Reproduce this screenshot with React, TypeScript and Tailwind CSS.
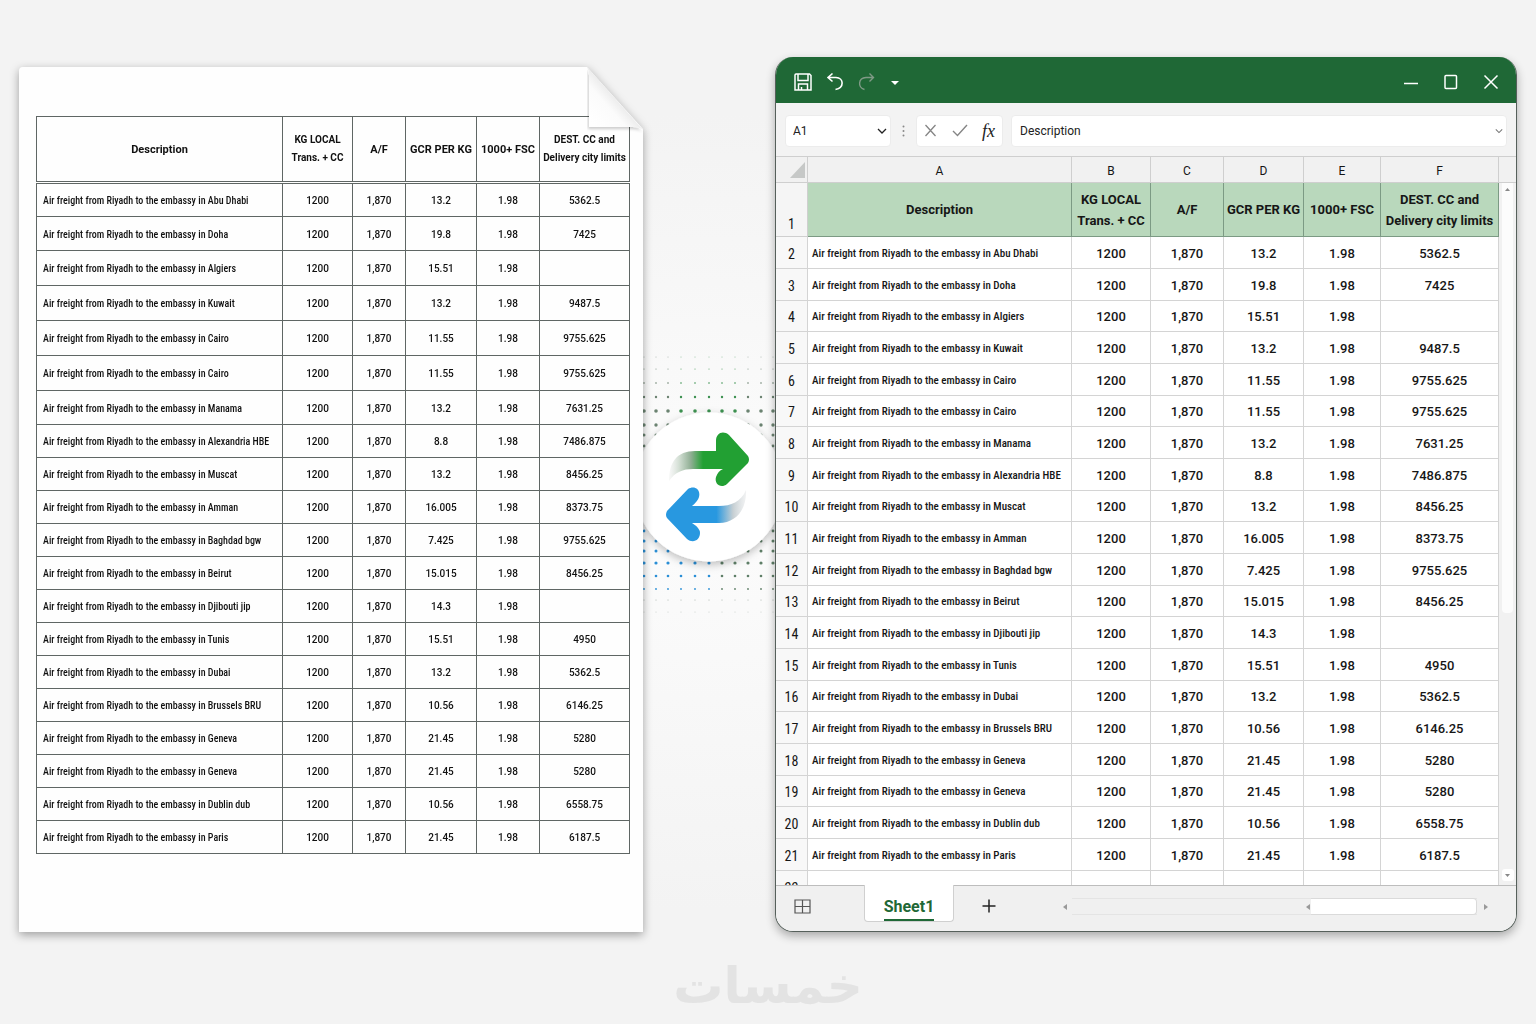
import React from "react";

type Row = {
  city: string;
  gcr: string;
  dest: string;
};

const rows: Row[] = [
  { city: "Abu Dhabi", gcr: "13.2", dest: "5362.5" },
  { city: "Doha", gcr: "19.8", dest: "7425" },
  { city: "Algiers", gcr: "15.51", dest: "" },
  { city: "Kuwait", gcr: "13.2", dest: "9487.5" },
  { city: "Cairo", gcr: "11.55", dest: "9755.625" },
  { city: "Cairo", gcr: "11.55", dest: "9755.625" },
  { city: "Manama", gcr: "13.2", dest: "7631.25" },
  { city: "Alexandria HBE", gcr: "8.8", dest: "7486.875" },
  { city: "Muscat", gcr: "13.2", dest: "8456.25" },
  { city: "Amman", gcr: "16.005", dest: "8373.75" },
  { city: "Baghdad bgw", gcr: "7.425", dest: "9755.625" },
  { city: "Beirut", gcr: "15.015", dest: "8456.25" },
  { city: "Djibouti jip", gcr: "14.3", dest: "" },
  { city: "Tunis", gcr: "15.51", dest: "4950" },
  { city: "Dubai", gcr: "13.2", dest: "5362.5" },
  { city: "Brussels BRU", gcr: "10.56", dest: "6146.25" },
  { city: "Geneva", gcr: "21.45", dest: "5280" },
  { city: "Geneva", gcr: "21.45", dest: "5280" },
  { city: "Dublin dub", gcr: "10.56", dest: "6558.75" },
  { city: "Paris", gcr: "21.45", dest: "6187.5" },
];

// two-line headings are split on \n
const headings = [
  "Description",
  "KG LOCAL\nTrans. + CC",
  "A/F",
  "GCR PER KG",
  "1000+ FSC",
  "DEST. CC and\nDelivery city limits",
];

const cellsOf = (row: Row) => ["1200", "1,870", row.gcr, "1.98", row.dest];

function paperRowHeight(i: number) {
  if (i < 2 || i === 6) return "h-[34px]";
  return i < 6 ? "h-[35px]" : "h-[33px]";
}

function Paper() {
  return (
    <div className="relative mt-[10px] drop-shadow-[0_3px_5px_rgba(0,0,0,0.35)]">
      <div className="h-full rounded-tl-[4px] bg-[#fefefe] px-[13px] pb-[76px] pl-[17px] pt-[49px] [clip-path:polygon(0_0,calc(100%-56px)_0,100%_62px,100%_100%,0_100%)]">
        <table className="w-full table-fixed border-collapse text-[10px] font-medium leading-4 text-[#111]">
          <colgroup>
            <col className="w-[246px]" />
            <col className="w-[70px]" />
            <col className="w-[53px]" />
            <col className="w-[71px]" />
            <col className="w-[63px]" />
            <col className="w-[90px]" />
          </colgroup>
          <thead>
            <tr className="h-[66px]">
              {headings.map((h) => (
                <th
                  key={h}
                  className={`whitespace-pre border border-b-[3px] border-[#5f6664] p-0 font-bold leading-[18px] [border-bottom-style:double] ${
                    h.includes("\n") ? "text-[10px]" : "pt-[2px] text-[11px]"
                  }`}
                >
                  {h}
                </th>
              ))}
            </tr>
          </thead>
          <tbody>
            {rows.map((row, i) => (
              <tr key={i} className={paperRowHeight(i)}>
                <td className="whitespace-nowrap border border-[#5f6664] pb-0 pl-[6px] pr-0 pt-[2px] font-['Roboto_Condensed',Roboto,sans-serif]">
                  Air freight from Riyadh to the embassy in {row.city}
                </td>
                {cellsOf(row).map((c, j) => (
                  <td key={j} className="border border-[#5f6664] p-0 pt-[2px] text-center">
                    {c}
                  </td>
                ))}
              </tr>
            ))}
          </tbody>
        </table>
      </div>
      <svg className="absolute right-0 top-0 h-[66px] w-[56px]" viewBox="0 0 56 66" aria-hidden="true">
        <defs>
          <linearGradient id="fold" x1="0.1" y1="0.9" x2="0.6" y2="0.4">
            <stop offset="0" stopColor="#ffffff" />
            <stop offset="0.55" stopColor="#fbfbfb" />
            <stop offset="1" stopColor="#e2e2e2" />
          </linearGradient>
          <filter id="foldShadow" x="-20%" y="-20%" width="140%" height="140%">
            <feDropShadow dx="-1" dy="2" stdDeviation="1.5" floodOpacity="0.2" />
          </filter>
        </defs>
        <path d="M0 0 Q2 3 2 8 V60 H46 Q53 60 56 63 Z" fill="url(#fold)" filter="url(#foldShadow)" />
      </svg>
    </div>
  );
}

// halftone grid behind the badge
const dotColumns = [1, 13, 25, 38, 52, 66, 79, 92, 105, 118, 130];
const dotRows = [
  { y: 7, r: 0.4 },
  { y: 19, r: 0.5 },
  { y: 33, r: 0.8 },
  { y: 47, r: 1.2 },
  { y: 61, r: 1.8 },
  { y: 75, r: 1.7 },
  { y: 85, r: 1.5 },
  { y: 96, r: 1.4 },
  { y: 181, r: 1.4 },
  { y: 191, r: 1.5 },
  { y: 201, r: 1.5 },
  { y: 213, r: 1.6 },
  { y: 226, r: 1.3 },
  { y: 239, r: 0.9 },
  { y: 250, r: 0.5 },
  { y: 262, r: 0.4 },
];

function dotColor(x: number, y: number) {
  if (y > 245) return "#9aa8a0";
  if (y > 170) return x < 70 ? "#2a8fd6" : "#5f7f68";
  return x > 30 && x < 100 ? "#3d9150" : "#6b8371";
}

function ConvertBadge() {
  return (
    <svg className="mt-[293px] h-[280px] w-full" viewBox="0 0 132 280" aria-hidden="true">
      <defs>
        <linearGradient id="greenTail" x1="24" x2="64" y1="0" y2="0" gradientUnits="userSpaceOnUse">
          <stop offset="0" stopColor="#e6e7e6" stopOpacity="0.1" />
          <stop offset="0.3" stopColor="#d3dfd4" />
          <stop offset="0.6" stopColor="#8fae93" />
          <stop offset="0.9" stopColor="#22a033" />
        </linearGradient>
        <linearGradient id="blueTail" x1="103" x2="66" y1="0" y2="0" gradientUnits="userSpaceOnUse">
          <stop offset="0" stopColor="#e3e5e6" stopOpacity="0.5" />
          <stop offset="0.35" stopColor="#c6cfd3" />
          <stop offset="0.8" stopColor="#2898e0" />
        </linearGradient>
        <filter id="badgeShadow" x="-20%" y="-20%" width="140%" height="140%">
          <feDropShadow dx="0" dy="3" stdDeviation="4" floodOpacity="0.25" />
        </filter>
      </defs>
      {dotRows.map((row) =>
        dotColumns.map((x) => (
          <circle key={`${x}-${row.y}`} cx={x} cy={row.y} r={row.r} fill={dotColor(x, row.y)} />
        ))
      )}
      <circle cx="66" cy="137" r="74.5" fill="#fff" filter="url(#badgeShadow)" />
      <path d="M26 131 C26 112 34 101 52 101 H74 V119 H50 C40 119 32 122 26 131 Z" fill="url(#greenTail)" />
      <path
        d="M62 101 H73 V91 C73 83 80 80 86 85 L105 106 Q107 109.500 105 113 L84 134 C78 139 71 134 73 127 Q75 121 80 119 H62 Z"
        fill="#22a033"
      />
      <path d="M103 140 C104 158 94 173 76 173 H56 V156 H76 C88 156 98 152 103 140 Z" fill="url(#blueTail)" />
      <path
        d="M68 156 H49 Q55 151 56 147 C58 139 51 135 45 139 L24 161 Q22 165 24 168 L44 189 C50 194 57 190 57 183 Q57 178 49 173 H68 Z"
        fill="#2898e0"
      />
    </svg>
  );
}

function TitleBar() {
  return (
    <div className="flex h-[46px] items-center bg-[#1f6836] pt-[3px] text-white">
      <button aria-label="Save" className="ml-[17px]">
        <svg className="size-5" viewBox="0 0 20 20" fill="none" stroke="currentColor" strokeWidth="1.500">
          <path d="M3 2 H16.500 L18 3.500 V18 H2 V3 Q2 2 3 2 Z M5 2 V8.500 H15 V2 M5.500 18 V12 H14.500 V18 M8.500 18 V15" />
        </svg>
      </button>
      <button aria-label="Undo" className="ml-3">
        <svg className="size-5" viewBox="0 0 20 20" fill="none" stroke="currentColor" strokeWidth="1.600">
          <path d="M7.500 1.500 L3 5.500 L7.500 9.500 M3 5.500 H11 C19 6 19.500 15.500 10.500 17.500" />
        </svg>
      </button>
      <button aria-label="Redo" className="ml-3 text-[#7f9a86]">
        <svg className="size-5" viewBox="0 0 20 20" fill="none" stroke="currentColor" strokeWidth="1.400">
          <path d="M12.500 1.500 L16.500 5.500 L12.500 9.500 M16.500 5.500 H9 C1 6 0.500 15.500 7.500 17.500" />
        </svg>
      </button>
      <button aria-label="Customize toolbar" className="ml-[14px]">
        <svg className="size-2" viewBox="0 0 8 8" fill="currentColor">
          <path d="M0 3 H8 L4 7 Z" />
        </svg>
      </button>
      <div className="ml-auto mr-[17px] flex items-center gap-6">
        <button aria-label="Minimize">
          <svg className="size-4" viewBox="0 0 16 16" stroke="currentColor" strokeWidth="1.500">
            <path d="M1 9.500 H15" />
          </svg>
        </button>
        <button aria-label="Maximize">
          <svg className="size-4" viewBox="0 0 16 16" fill="none" stroke="currentColor" strokeWidth="1.500">
            <rect x="2" y="1.500" width="11.500" height="13" rx="1" />
          </svg>
        </button>
        <button aria-label="Close">
          <svg className="size-4" viewBox="0 0 16 16" stroke="currentColor" strokeWidth="1.500">
            <path d="M1.500 1.500 L14.500 14.500 M14.500 1.500 L1.500 14.500" />
          </svg>
        </button>
      </div>
    </div>
  );
}

function Chevron({ className }: { className: string }) {
  return (
    <svg className={className} viewBox="0 0 10 10" fill="none" stroke="currentColor" strokeWidth="1.300" aria-hidden="true">
      <path d="M1 3 L5 7 L9 3" />
    </svg>
  );
}

function FormulaBar() {
  return (
    <div className="flex h-[54px] items-center border-b border-[#cfcfcf] bg-[#f3f3f3] px-[9px] pt-[2px] text-[12px] text-[#222]">
      <div className="relative">
        <select
          aria-label="Name box"
          className="h-8 w-[106px] appearance-none rounded-[4px] border border-[#ececec] bg-white px-[7px]"
        >
          <option>A1</option>
        </select>
        <Chevron className="pointer-events-none absolute right-1 top-[11px] size-[10px]" />
      </div>
      <svg className="mx-[10px] h-3 w-[5px]" viewBox="0 0 5 12" fill="#888" aria-hidden="true">
        <circle cx="2.500" cy="1.500" r="1" />
        <circle cx="2.500" cy="6" r="1" />
        <circle cx="2.500" cy="10.500" r="1" />
      </svg>
      <div className="flex h-8 w-[87px] items-center justify-between rounded-[4px] border border-[#ececec] bg-white px-[7px]">
        <button aria-label="Cancel" className="text-[#858585]">
          <svg className="size-[13px]" viewBox="0 0 13 13" stroke="currentColor" strokeWidth="1.300">
            <path d="M1.500 1 L11.500 12 M11.500 1 L1.500 12" />
          </svg>
        </button>
        <button aria-label="Enter" className="text-[#858585]">
          <svg className="size-4" viewBox="0 0 16 16" fill="none" stroke="currentColor" strokeWidth="1.400">
            <path d="M1 8 L5.500 12.500 L15 2" />
          </svg>
        </button>
        <button aria-label="Insert function" className="font-['Liberation_Serif',serif] text-[18px] italic leading-5">
          fx
        </button>
      </div>
      <div className="relative ml-2 flex-1">
        <input
          aria-label="Formula"
          defaultValue="Description"
          className="h-8 w-full rounded-[4px] border border-[#ececec] bg-white px-2"
        />
        <Chevron className="pointer-events-none absolute right-1 top-3 size-2 text-[#777]" />
      </div>
    </div>
  );
}

function Sheet() {
  return (
    <div className="flex h-[728px] overflow-hidden bg-white">
      <table className="h-max w-full flex-1 table-fixed border-separate border-spacing-0 text-[13px] font-medium leading-5 text-[#161616]">
        <colgroup>
          <col className="w-[32px]" />
          <col className="w-[264px]" />
          <col className="w-[79px]" />
          <col className="w-[73px]" />
          <col className="w-[80px]" />
          <col className="w-[77px]" />
          <col className="w-[118px]" />
        </colgroup>
        <thead>
          <tr className="h-[26px] bg-[#f1f1f1]">
            <th className="border-b border-r border-[#cfcfcf] p-0">
              <svg className="ml-auto mr-[2px] size-4" viewBox="0 0 16 16" fill="#c6c8c7" aria-hidden="true">
                <path d="M16 0 V16 H1 Z" />
              </svg>
            </th>
            {["A", "B", "C", "D", "E", "F"].map((c) => (
              <th key={c} className="border-b border-r border-[#cfcfcf] p-0 pt-[2px] text-[12px] font-normal">
                {c}
              </th>
            ))}
          </tr>
        </thead>
        <tbody className="[&_th]:font-['Roboto_Condensed',Roboto,sans-serif] [&_th]:text-[14px] [&_th]:font-normal">
          <tr className="h-[54px]">
            <th className="border-b border-r border-[#cfcfcf] bg-[#f5f5f5] p-0 pb-[2px] align-bottom">1</th>
            {headings.map((h) => (
              <td
                key={h}
                className="whitespace-pre border-b border-r border-[#7c9a84] bg-[#b9d8bc] p-0 text-center font-bold leading-[21px]"
              >
                {h}
              </td>
            ))}
          </tr>
          {rows.map((row, i) => (
            <tr key={i} className={i % 3 === 2 ? "h-[31px]" : "h-[32px]"}>
              <th className="border-b border-r border-[#d4d4d4] bg-[#f8f8f8] p-0 pt-[2px]">{i + 2}</th>
              <td className="whitespace-nowrap border-b border-r border-[#d4d4d4] pb-0 pl-1 pr-0 pt-[2px] font-['Roboto_Condensed',Roboto,sans-serif] text-[11px]">
                Air freight from Riyadh to the embassy in {row.city}
              </td>
              {cellsOf(row).map((c, j) => (
                <td key={j} className="border-b border-r border-[#d4d4d4] p-0 pt-[2px] text-center">
                  {c}
                </td>
              ))}
            </tr>
          ))}
          <tr className="h-[34px]">
            <th className="border-r border-[#d4d4d4] bg-[#f8f8f8] p-0">22</th>
            {headings.map((h) => (
              <td key={h} className="border-r border-[#d4d4d4]" />
            ))}
          </tr>
        </tbody>
      </table>
      <div className="flex w-[17px] flex-col items-center bg-[#f1f1f1]">
        <div className="h-[26px] w-full border-b border-[#cfcfcf]" />
        <div className="flex h-[430px] w-[11px] justify-center rounded-b-[4px] bg-[#fcfcfc] pt-1">
          <svg className="size-[5px]" viewBox="0 0 5 5" fill="#888" aria-hidden="true">
            <path d="M0 4 L2.500 1 L5 4 Z" />
          </svg>
        </div>
        <div className="mb-1 mt-auto flex size-3 items-center justify-center rounded-[3px] bg-white">
          <svg className="size-[5px]" viewBox="0 0 5 5" fill="#888" aria-hidden="true">
            <path d="M0 1 L2.500 4 L5 1 Z" />
          </svg>
        </div>
      </div>
    </div>
  );
}

function SheetTabs() {
  return (
    <div className="flex h-[46px] border-t border-[#bdbdbd] bg-[#f0f0f0]">
      <button aria-label="All sheets" className="ml-[18px] h-10 text-[#555]">
        <svg className="h-[15px] w-[17px]" viewBox="0 0 17 15" fill="none" stroke="currentColor" strokeWidth="1.200">
          <path d="M1 1 H16 V14 H1 Z M8.500 1 V14 M1 7.500 H16" />
        </svg>
      </button>
      <button className="-mt-px ml-[53px] flex h-[37px] w-[90px] items-end justify-center rounded-b-[4px] border border-t-0 border-[#d0d0d0] bg-white text-[16px] font-bold text-[#1f6836]">
        <span className="border-b-2 border-[#1f6836] leading-[24px]">Sheet1</span>
      </button>
      <button aria-label="New sheet" className="ml-7 h-10 text-[#222]">
        <svg className="size-[14px]" viewBox="0 0 14 14" stroke="currentColor" strokeWidth="1.500">
          <path d="M7 0.500 V13.500 M0.500 7 H13.500" />
        </svg>
      </button>
      <div className="ml-[66px] mr-[27px] flex h-[41px] flex-1 items-center text-[#999]">
        <svg className="mr-1 size-[6px]" viewBox="0 0 6 6" fill="currentColor" aria-hidden="true">
          <path d="M5 0 V6 L1 3 Z" />
        </svg>
        <div className="flex h-[17px] flex-1 items-center justify-end border-y border-[#e4e4e4]">
          <svg className="size-[6px]" viewBox="0 0 6 6" fill="currentColor" aria-hidden="true">
            <path d="M5 0 V6 L1 3 Z" />
          </svg>
          <div className="h-[17px] w-[41%] rounded-r-[4px] border border-l-0 border-[#dadada] bg-white" />
        </div>
        <svg className="ml-[6px] size-[6px]" viewBox="0 0 6 6" fill="currentColor" aria-hidden="true">
          <path d="M1 0 V6 L5 3 Z" />
        </svg>
      </div>
    </div>
  );
}

export default function App() {
  return (
    <main className="min-h-screen bg-[#f4f4f4] bg-[radial-gradient(ellipse_at_46%_50%,#fcfcfc_0%,#f9f9f9_20%,#f3f3f3_55%)] px-[19px] pt-[57px] font-[Roboto,sans-serif]">
      <div className="grid grid-cols-[623fr_132px_743fr]">
        <Paper />
        <ConvertBadge />
        <div className="overflow-hidden rounded-[18px] border border-t-0 border-[#56605b] shadow-[0_4px_10px_rgba(0,0,0,0.3)]">
          <TitleBar />
          <FormulaBar />
          <Sheet />
          <SheetTabs />
        </div>
      </div>
      <p
        lang="ar"
        dir="rtl"
        className="mt-[26px] text-center font-['DejaVu_Sans',sans-serif] text-[50px] font-bold leading-[56px] text-[#e3e3e3]"
      >
        خمسات
      </p>
    </main>
  );
}
